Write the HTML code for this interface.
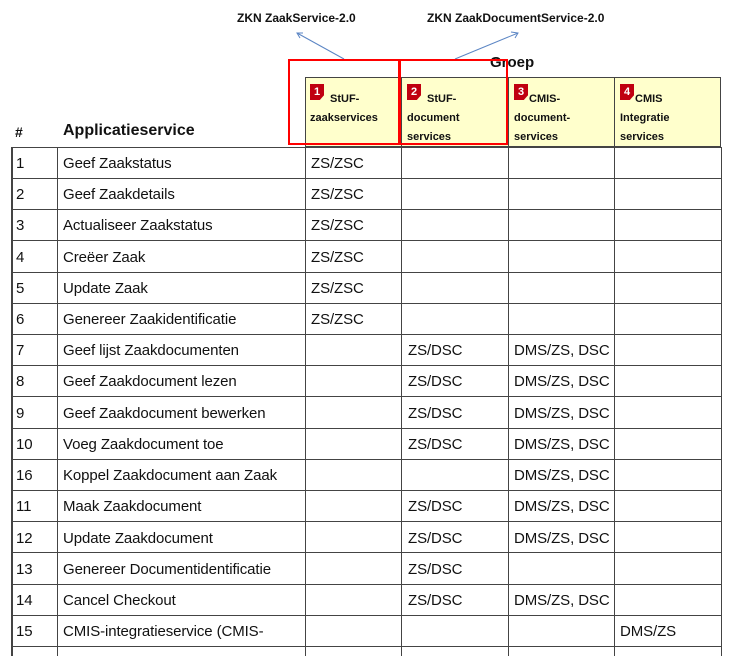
<!DOCTYPE html>
<html><head><meta charset="utf-8"><style>
body{margin:0;width:732px;height:656px;background:#fff;position:relative;overflow:hidden;font-family:"Liberation Sans",sans-serif;color:#111}
.a{position:absolute;white-space:nowrap}
.t{font-size:15px;letter-spacing:-0.1px}
.h{font-size:11px;font-weight:bold;line-height:19px}
.b{position:absolute;width:14px;height:16px;background:#c00010;color:#fff;font-size:11px;font-weight:bold;text-align:center;line-height:16px;clip-path:polygon(0 0,100% 0,100% 70%,70% 100%,0 100%)}
.v{position:absolute;width:1px;background:#444}
.hl{position:absolute;height:1px;background:#444;left:11px;width:711px}
</style></head><body>
<div class="a" style="left:237px;top:11px;font-size:12px;font-weight:bold">ZKN ZaakService-2.0</div>
<div class="a" style="left:427px;top:11px;font-size:12px;font-weight:bold">ZKN ZaakDocumentService-2.0</div>
<svg style="position:absolute;left:0;top:0" width="732" height="160">
<g stroke="#5b85c4" stroke-width="1" fill="none">
<line x1="344" y1="59" x2="297" y2="33"/><polyline points="303,33 297,33 300,38"/>
<line x1="455" y1="59" x2="518" y2="33"/><polyline points="511,32 518,33 515,38"/>
</g></svg>
<div class="a" style="left:490px;top:54px;font-size:15px;font-weight:bold">Groep</div>
<div style="position:absolute;left:305px;top:77px;width:416px;height:70px;background:#ffffcc;border:1px solid #444;box-sizing:border-box"></div>
<div class="v" style="left:401px;top:77px;height:70px"></div>
<div class="v" style="left:508px;top:77px;height:70px"></div>
<div class="v" style="left:614px;top:77px;height:70px"></div>
<div class="b" style="left:310px;top:84px">1</div>
<div class="b" style="left:407px;top:84px">2</div>
<div class="b" style="left:514px;top:84px">3</div>
<div class="b" style="left:620px;top:84px">4</div>
<div class="a h" style="left:310px;top:90px"><span style="margin-left:20px">StUF-</span><br>zaakservices</div>
<div class="a h" style="left:407px;top:90px"><span style="margin-left:20px">StUF-</span><br>document<br>services</div>
<div class="a h" style="left:514px;top:90px"><span style="margin-left:15px">CMIS-</span><br>document-<br>services</div>
<div class="a h" style="left:620px;top:90px"><span style="margin-left:15px">CMIS</span><br>Integratie<br>services</div>
<div style="position:absolute;left:288px;top:59px;width:112px;height:86px;border:2px solid #f00;box-sizing:border-box"></div>
<div style="position:absolute;left:399px;top:59px;width:109px;height:86px;border:2px solid #f00;box-sizing:border-box"></div>
<div class="a" style="left:15px;top:124px;font-size:14px;font-weight:bold">#</div>
<div class="a" style="left:63px;top:122px;font-size:16px;font-weight:bold">Applicatieservice</div>
<div class="v" style="left:11px;top:147px;height:509px;width:2px"></div>
<div class="v" style="left:57px;top:147px;height:509px"></div>
<div class="v" style="left:305px;top:147px;height:509px"></div>
<div class="v" style="left:401px;top:147px;height:509px"></div>
<div class="v" style="left:508px;top:147px;height:509px"></div>
<div class="v" style="left:614px;top:147px;height:509px"></div>
<div class="v" style="left:721px;top:147px;height:509px"></div>
<div class="hl" style="top:147px"></div><div class="hl" style="top:178px"></div><div class="hl" style="top:209px"></div><div class="hl" style="top:240px"></div><div class="hl" style="top:272px"></div><div class="hl" style="top:303px"></div><div class="hl" style="top:334px"></div><div class="hl" style="top:365px"></div><div class="hl" style="top:396px"></div><div class="hl" style="top:428px"></div><div class="hl" style="top:459px"></div><div class="hl" style="top:490px"></div><div class="hl" style="top:521px"></div><div class="hl" style="top:552px"></div><div class="hl" style="top:584px"></div><div class="hl" style="top:615px"></div><div class="hl" style="top:646px"></div>
<div class="a t" style="left:16px;top:155px">1</div><div class="a t" style="left:63px;top:155px">Geef Zaakstatus</div><div class="a t" style="left:311px;top:155px">ZS/ZSC</div>
<div class="a t" style="left:16px;top:186px">2</div><div class="a t" style="left:63px;top:186px">Geef Zaakdetails</div><div class="a t" style="left:311px;top:186px">ZS/ZSC</div>
<div class="a t" style="left:16px;top:217px">3</div><div class="a t" style="left:63px;top:217px">Actualiseer Zaakstatus</div><div class="a t" style="left:311px;top:217px">ZS/ZSC</div>
<div class="a t" style="left:16px;top:249px">4</div><div class="a t" style="left:63px;top:249px">Creëer Zaak</div><div class="a t" style="left:311px;top:249px">ZS/ZSC</div>
<div class="a t" style="left:16px;top:280px">5</div><div class="a t" style="left:63px;top:280px">Update Zaak</div><div class="a t" style="left:311px;top:280px">ZS/ZSC</div>
<div class="a t" style="left:16px;top:311px">6</div><div class="a t" style="left:63px;top:311px">Genereer Zaakidentificatie</div><div class="a t" style="left:311px;top:311px">ZS/ZSC</div>
<div class="a t" style="left:16px;top:342px">7</div><div class="a t" style="left:63px;top:342px">Geef lijst Zaakdocumenten</div><div class="a t" style="left:408px;top:342px">ZS/DSC</div><div class="a t" style="left:514px;top:342px">DMS/ZS, DSC</div>
<div class="a t" style="left:16px;top:373px">8</div><div class="a t" style="left:63px;top:373px">Geef Zaakdocument lezen</div><div class="a t" style="left:408px;top:373px">ZS/DSC</div><div class="a t" style="left:514px;top:373px">DMS/ZS, DSC</div>
<div class="a t" style="left:16px;top:405px">9</div><div class="a t" style="left:63px;top:405px">Geef Zaakdocument bewerken</div><div class="a t" style="left:408px;top:405px">ZS/DSC</div><div class="a t" style="left:514px;top:405px">DMS/ZS, DSC</div>
<div class="a t" style="left:16px;top:436px">10</div><div class="a t" style="left:63px;top:436px">Voeg Zaakdocument toe</div><div class="a t" style="left:408px;top:436px">ZS/DSC</div><div class="a t" style="left:514px;top:436px">DMS/ZS, DSC</div>
<div class="a t" style="left:16px;top:467px">16</div><div class="a t" style="left:63px;top:467px">Koppel Zaakdocument aan Zaak</div><div class="a t" style="left:514px;top:467px">DMS/ZS, DSC</div>
<div class="a t" style="left:16px;top:498px">11</div><div class="a t" style="left:63px;top:498px">Maak Zaakdocument</div><div class="a t" style="left:408px;top:498px">ZS/DSC</div><div class="a t" style="left:514px;top:498px">DMS/ZS, DSC</div>
<div class="a t" style="left:16px;top:530px">12</div><div class="a t" style="left:63px;top:530px">Update Zaakdocument</div><div class="a t" style="left:408px;top:530px">ZS/DSC</div><div class="a t" style="left:514px;top:530px">DMS/ZS, DSC</div>
<div class="a t" style="left:16px;top:561px">13</div><div class="a t" style="left:63px;top:561px">Genereer Documentidentificatie</div><div class="a t" style="left:408px;top:561px">ZS/DSC</div>
<div class="a t" style="left:16px;top:592px">14</div><div class="a t" style="left:63px;top:592px">Cancel Checkout</div><div class="a t" style="left:408px;top:592px">ZS/DSC</div><div class="a t" style="left:514px;top:592px">DMS/ZS, DSC</div>
<div class="a t" style="left:16px;top:623px">15</div><div class="a t" style="left:63px;top:623px">CMIS-integratieservice (CMIS-</div><div class="a t" style="left:620px;top:623px">DMS/ZS</div>
</body></html>
